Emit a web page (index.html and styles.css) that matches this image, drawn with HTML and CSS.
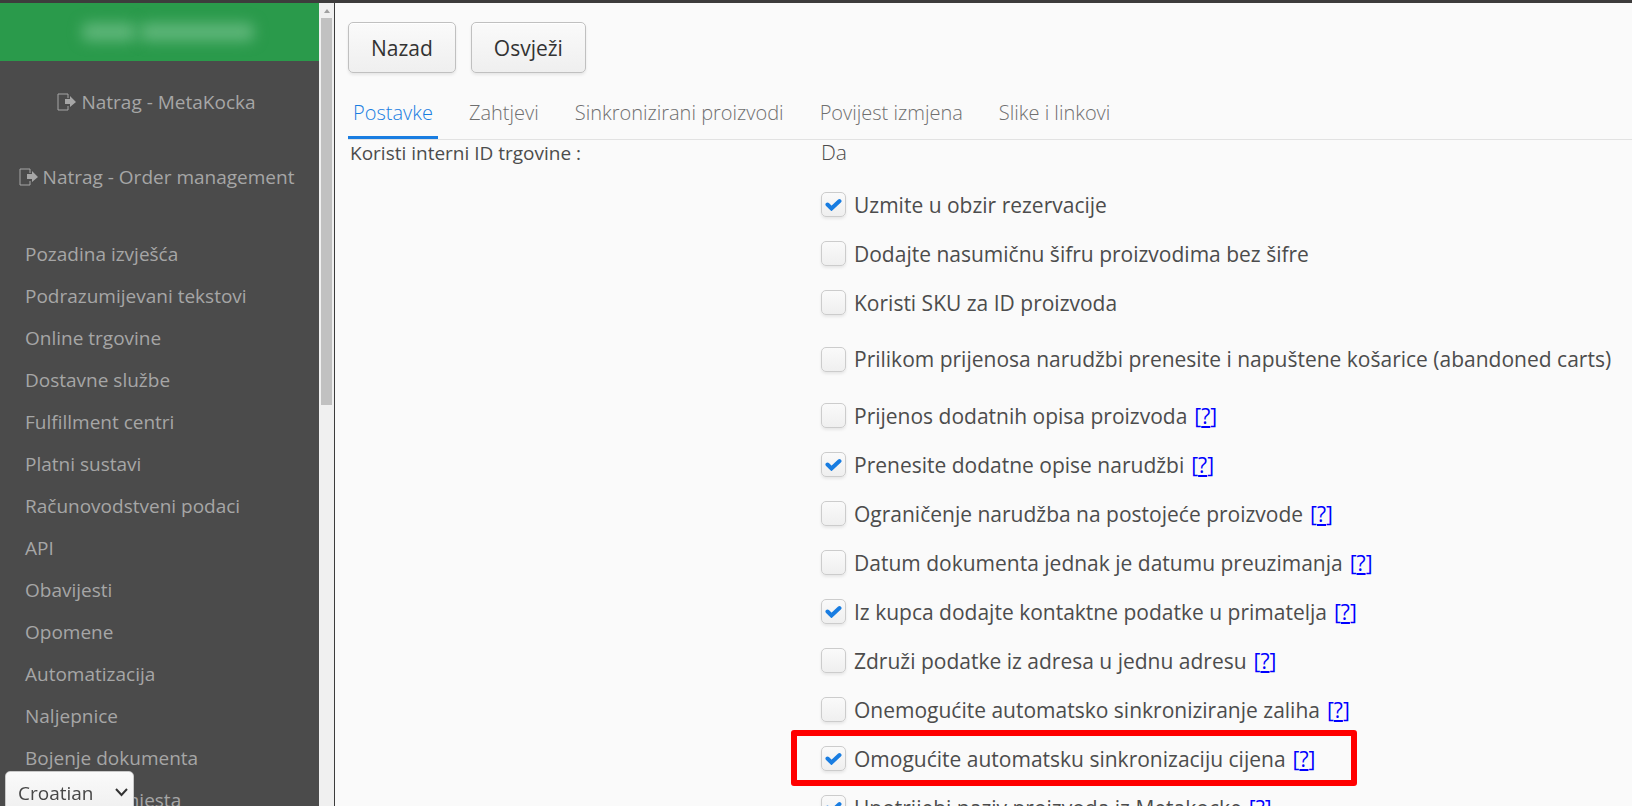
FILE: index.html
```
<!doctype html>
<html lang="hr">
<head>
	<meta charset="UTF-8" />
	<title>Online trgovine</title>
	<link rel="stylesheet" href="styles.css">
</head>
<body>
	<div class="page">
		<aside class="sidebar">
			<div class="user"><i class="name"></i><i class="name long"></i></div>
			<nav>
				<div class="back">
					<a href="#"><svg viewBox="0 0 20 18" width="20" height="18"><path d="M11 5V1H1v16h10v-4" fill="none" stroke="currentColor" stroke-width="1"/><path d="M8 6h5V3l6 6-6 5v-3H8z" fill="currentColor"/></svg>Natrag - MetaKocka</a>
					<a href="#"><svg viewBox="0 0 20 18" width="20" height="18"><path d="M11 5V1H1v16h10v-4" fill="none" stroke="currentColor" stroke-width="1"/><path d="M8 6h5V3l6 6-6 5v-3H8z" fill="currentColor"/></svg>Natrag - Order management</a>
				</div>
				<ul class="menu">
					<li><a href="#">Pozadina izvješća</a></li>
					<li><a href="#">Podrazumijevani tekstovi</a></li>
					<li><a href="#">Online trgovine</a></li>
					<li><a href="#">Dostavne službe</a></li>
					<li><a href="#">Fulfillment centri</a></li>
					<li><a href="#">Platni sustavi</a></li>
					<li><a href="#">Računovodstveni podaci</a></li>
					<li><a href="#">API</a></li>
					<li><a href="#">Obavijesti</a></li>
					<li><a href="#">Opomene</a></li>
					<li><a href="#">Automatizacija</a></li>
					<li><a href="#">Naljepnice</a></li>
					<li><a href="#">Bojenje dokumenta</a></li>
					<li><a href="#">Troškovna mjesta</a></li>
				</ul>
			</nav>
			<select class="lang" aria-label="Jezik">
				<option>Croatian</option>
				<option>English</option>
			</select>
		</aside>
		<div class="scroll"><i class="arrow"></i><i class="thumb"></i></div>
		<main class="content">
			<div class="buttons">
				<button type="button">Nazad</button>
				<button type="button">Osvježi</button>
			</div>
			<nav class="tabs">
				<a href="#" class="active">Postavke</a>
				<a href="#">Zahtjevi</a>
				<a href="#">Sinkronizirani proizvodi</a>
				<a href="#">Povijest izmjena</a>
				<a href="#">Slike i linkovi</a>
			</nav>
			<div class="form">
				<div class="caption">Koristi interni ID trgovine :</div>
				<div class="fields">
					<p class="value">Da</p>
					<div class="row"><label><input type="checkbox" checked>Uzmite u obzir rezervacije</label></div>
					<div class="row"><label><input type="checkbox">Dodajte nasumičnu šifru proizvodima bez šifre</label></div>
					<div class="row"><label><input type="checkbox">Koristi SKU za ID proizvoda</label></div>
					<div class="row tall"><label><input type="checkbox">Prilikom prijenosa narudžbi prenesite i napuštene košarice (abandoned carts)</label></div>
					<div class="row"><label><input type="checkbox">Prijenos dodatnih opisa proizvoda</label><a href="#">[<u>?</u>]</a></div>
					<div class="row"><label><input type="checkbox" checked>Prenesite dodatne opise narudžbi</label><a href="#">[<u>?</u>]</a></div>
					<div class="row"><label><input type="checkbox">Ograničenje narudžba na postojeće proizvode</label><a href="#">[<u>?</u>]</a></div>
					<div class="row"><label><input type="checkbox">Datum dokumenta jednak je datumu preuzimanja</label><a href="#">[<u>?</u>]</a></div>
					<div class="row"><label><input type="checkbox" checked>Iz kupca dodajte kontaktne podatke u primatelja</label><a href="#">[<u>?</u>]</a></div>
					<div class="row"><label><input type="checkbox">Združi podatke iz adresa u jednu adresu</label><a href="#">[<u>?</u>]</a></div>
					<div class="row"><label><input type="checkbox">Onemogućite automatsko sinkroniziranje zaliha</label><a href="#">[<u>?</u>]</a></div>
					<div class="row marked"><label><input type="checkbox" checked>Omogućite automatsku sinkronizaciju cijena</label><a href="#">[<u>?</u>]</a></div>
					<div class="row"><label><input type="checkbox" checked>Upotrijebi naziv proizvoda iz Metakocke</label><a href="#">[<u>?</u>]</a></div>
				</div>
			</div>
		</main>
	</div>
</body>
</html>
```
FILE: styles.css
```
*{
	margin: 0;
	padding: 0;
	box-sizing: border-box;
}
body{
	background: #fafafa;
	color: #4c4c4c;
	font-family: "Open Sans", sans-serif;
	overflow: hidden;
}
a{
	text-decoration: none;
}
.page{
	display: flex;
	height: 100vh;
	border-top: 3px solid #3d3c3c;
}

/* sidebar */
.sidebar{
	width: 319px;
	flex: none;
	overflow: hidden;
	background: #4b4b4b;
}
.sidebar a{
	color: #a6a6a6;
	font-size: 19px;
}
.user{
	display: flex;
	justify-content: center;
	align-items: center;
	gap: 4px;
	height: 58px;
	padding-left: 16px;
	background: #2a9a4b;
}
.name{
	width: 54px;
	height: 18px;
	border-radius: 6px;
	background: #5fb67a;
	filter: blur(7px);
}
.name.long{
	width: 114px;
}
.back{
	padding-top: 3px;
	text-align: center;
}
.back a{
	display: flex;
	justify-content: center;
	align-items: center;
	gap: 4px;
	height: 75px;
	padding-right: 6px;
}
.menu{
	padding: 19px 0 0 25px;
	list-style: none;
}
.menu a{
	display: block;
	height: 42px;
	line-height: 42px;
}
.lang{
	position: fixed;
	left: 5px;
	bottom: -8px;
	width: 129px;
	height: 43px;
	padding: 0 12px;
	appearance: none;
	border: 1px solid #c8c8c8;
	border-radius: 5px;
	color: #474747;
	font: 19px "Open Sans", sans-serif;
	background: url("data:image/svg+xml,%3Csvg xmlns='http://www.w3.org/2000/svg' width='13' height='9'%3E%3Cpath d='M1 1l5.500 6L12 1' fill='none' stroke='%23333' stroke-width='2'/%3E%3C/svg%3E") no-repeat right 5px center, linear-gradient(#fafafa, #efefef);
}

.scroll{
	width: 16px;
	flex: none;
	padding: 6px 2px 0;
	background: #f0f0f0;
	border-right: 1px solid #3c3c3c;
}
.arrow{
	display: block;
	width: 0;
	margin: 0 auto 5px;
	border: 3px solid transparent;
	border-top: 0;
	border-bottom: 4px solid #a0a0a0;
}
.thumb{
	display: block;
	width: 11px;
	height: 387px;
	background: #c1c1c1;
}

/* content */
.content{
	flex: 1;
	min-width: 0;
	overflow: hidden;
	padding: 19px 0 0 13px;
}
.buttons{
	display: flex;
	gap: 15px;
}
.buttons button{
	height: 51px;
	padding: 0 22px;
	border: 1px solid #c0c0c0;
	border-radius: 5px;
	background: linear-gradient(#fafafa, #efefef);
	box-shadow: inset 0 1px 0 #fff, 0 2px 3px rgba(0,0,0,.08);
	color: #333;
	font: 21px "Open Sans", sans-serif;
}
.tabs{
	display: flex;
	gap: 26px;
	margin-top: 15px;
	border-bottom: 1px solid #e2e2e2;
}
.tabs a{
	height: 51px;
	padding: 0 5px;
	line-height: 50px;
	color: #6f6f6f;
	font-size: 20px;
	font-weight: 300;
}
.tabs a.active{
	color: #197de1;
	border-bottom: 3px solid #197de1;
}
.form{
	display: grid;
	grid-template-columns: 471px 1fr;
	padding-left: 2px;
}
.caption{
	font-size: 19px;
	line-height: 26px;
}
.value{
	height: 40px;
	line-height: 24px;
	font-size: 21px;
	font-weight: 300;
}
.row{
	position: relative;
	display: flex;
	align-items: center;
	gap: 7px;
	width: max-content;
	height: 49px;
	font-size: 21px;
}
.row.tall{
	height: 64px;
}
.row label{
	display: flex;
	align-items: center;
	gap: 8px;
}
.row input{
	appearance: none;
	width: 25px;
	height: 25px;
	border: 1px solid #ccc;
	border-radius: 5px;
	background: linear-gradient(#fafafa, #efefef);
	box-shadow: 0 2px 3px rgba(0,0,0,.08);
}
.row input:checked{
	background: url("data:image/svg+xml,%3Csvg xmlns='http://www.w3.org/2000/svg' width='17' height='13'%3E%3Cpath d='M2.500 6.500l4 4 8-7.500' fill='none' stroke='%23197de1' stroke-width='4' stroke-linecap='round'/%3E%3C/svg%3E") no-repeat center, linear-gradient(#fafafa, #efefef);
}
.row a{
	color: #00f;
}
.row.marked::after{
	content: "";
	position: absolute;
	inset: -4px -42px -3px -30px;
	border: 6px solid #f00;
	border-radius: 3px;
	pointer-events: none;
}
```
